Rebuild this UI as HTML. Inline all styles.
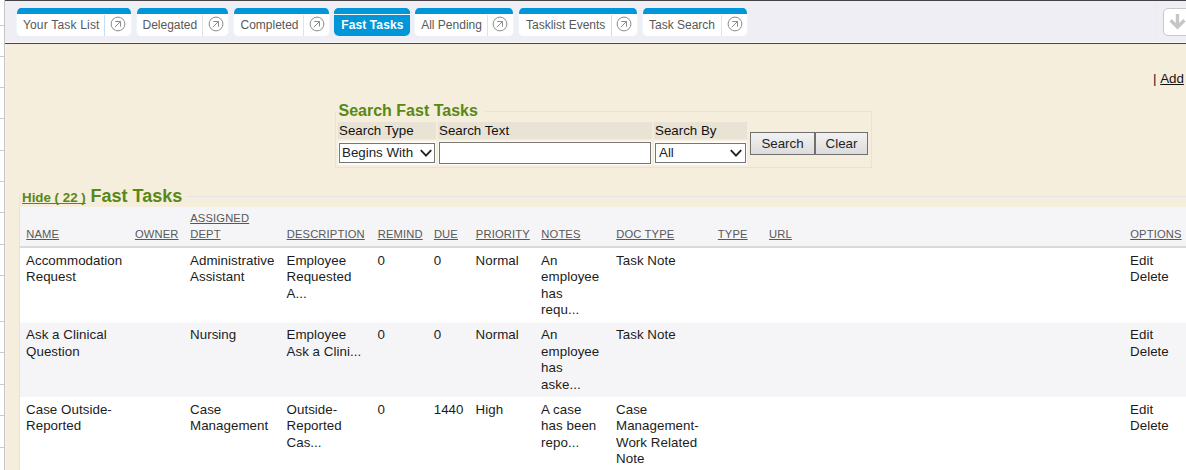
<!DOCTYPE html>
<html><head><meta charset="utf-8">
<style>
*{box-sizing:border-box;margin:0;padding:0;text-decoration-skip-ink:none}
html,body{width:1186px;height:470px;overflow:hidden;background:#fff;font-family:"Liberation Sans",sans-serif;position:relative}
.a{position:absolute}
#strip{left:4px;top:0;width:1px;height:470px;background:#c3c5cb}
.tick{position:absolute;left:0;width:4px;height:1px;background:#c8cace}
#bar{left:5px;top:0;width:1181px;height:44px;background:#efeef4;border-top:1px solid #444;border-bottom:1px solid #454545}
#barhl{left:5px;top:42px;width:1181px;height:1px;background:#fbfbfc}
#beige{left:5px;top:44px;width:1181px;height:426px;background:#f5eedd}
.tab{position:absolute;top:8px;height:28px;background:#fff;border-radius:5px;overflow:hidden;border-left:1px solid #edf6fc;border-right:1px solid #edf6fc}
.tab .top{position:absolute;left:-1px;right:-1px;top:0;height:6px;background:#0096d8}
.tab .t{position:absolute;top:10px;font-size:12px;color:#585858;white-space:nowrap;line-height:14px}
.tab .sep{position:absolute;top:7px;width:1px;height:21px;background:#e2e2e2}
.tab svg{position:absolute;top:8.3px}
.tab.act{background:#0096d8;border:none}
.tab.act .line{position:absolute;left:0;right:0;top:6px;height:1px;background:#f2f9fd}
.tab.act .t{color:#fff;font-weight:bold}
#dl{left:1163px;top:8px;width:40px;height:28px;background:#fff;border:1px solid #c8c8c8;border-radius:5px}
.c{position:absolute;font-size:13.33px;line-height:16.5px;color:#1c1c1c;white-space:nowrap;letter-spacing:0.05px}
.h{position:absolute;font-size:11.2px;line-height:16px;color:#585858;letter-spacing:0.15px;text-decoration:underline;white-space:nowrap}
.lbl{position:absolute;font-size:13.33px;line-height:16px;color:#111;white-space:nowrap}
.sel{position:absolute;height:20px;background:#fff;border:1px solid #767676;font-size:13.33px;color:#222;line-height:18px;padding-left:2px;white-space:nowrap}
.sel svg{position:absolute;top:4.5px}
.btn{position:absolute;top:132px;height:23px;border:1px solid #707070;background:linear-gradient(#f2f2f2,#dcdcdc);font-size:13.33px;color:#222;text-align:center;line-height:21.5px}
</style></head><body>
<div class="a" id="bar"></div>
<div class="a" id="barhl"></div>
<div class="a" id="beige"></div>
<div class="a" id="strip"></div>
<div class="a" style="left:5px;top:44px;width:1px;height:426px;background:#f9f4ea"></div>
<div class="tick" style="top:25px"></div><div class="tick" style="top:56px"></div><div class="tick" style="top:87px"></div><div class="tick" style="top:118px"></div><div class="tick" style="top:150px"></div><div class="tick" style="top:181px"></div><div class="tick" style="top:212px"></div><div class="tick" style="top:244px"></div><div class="tick" style="top:275px"></div><div class="tick" style="top:321px"></div><div class="tick" style="top:352px"></div><div class="tick" style="top:384px"></div><div class="tick" style="top:415px"></div><div class="tick" style="top:447px"></div>
<div class="tab" style="left:16px;width:116px"><div class="top"></div><span class="t" style="left:5.9px;letter-spacing:0.19px">Your Task List</span><div class="sep" style="left:87px;background:#bfe0f3"></div><svg style="left:93.3px" width="16" height="16" viewBox="0 0 16 16"><circle cx="8" cy="8" r="6.9" fill="none" stroke="#8c8c8c" stroke-width="1"/><path d="M4.8 11.2L10.5 5.5M5.3 5.5H10.5V10.6" fill="none" stroke="#8c8c8c" stroke-width="1"/></svg></div>
<div class="tab" style="left:136px;width:93px"><div class="top"></div><span class="t" style="left:5.5px;letter-spacing:0px">Delegated</span><div class="sep" style="left:65px;background:#e2e2e2"></div><svg style="left:70.6px" width="16" height="16" viewBox="0 0 16 16"><circle cx="8" cy="8" r="6.9" fill="none" stroke="#8c8c8c" stroke-width="1"/><path d="M4.8 11.2L10.5 5.5M5.3 5.5H10.5V10.6" fill="none" stroke="#8c8c8c" stroke-width="1"/></svg></div>
<div class="tab" style="left:233px;width:97px"><div class="top"></div><span class="t" style="left:6.5px;letter-spacing:0px">Completed</span><div class="sep" style="left:69px;background:#e2e2e2"></div><svg style="left:74.6px" width="16" height="16" viewBox="0 0 16 16"><circle cx="8" cy="8" r="6.9" fill="none" stroke="#8c8c8c" stroke-width="1"/><path d="M4.8 11.2L10.5 5.5M5.3 5.5H10.5V10.6" fill="none" stroke="#8c8c8c" stroke-width="1"/></svg></div>
<div class="tab act" style="left:334px;width:76px"><div class="top"></div><div class="line"></div><span class="t" style="left:7.2px;letter-spacing:0.12px">Fast Tasks</span></div>
<div class="tab" style="left:414px;width:100px"><div class="top"></div><span class="t" style="left:6.2px;letter-spacing:0px">All Pending</span><div class="sep" style="left:72px;background:#e2e2e2"></div><svg style="left:77.4px" width="16" height="16" viewBox="0 0 16 16"><circle cx="8" cy="8" r="6.9" fill="none" stroke="#8c8c8c" stroke-width="1"/><path d="M4.8 11.2L10.5 5.5M5.3 5.5H10.5V10.6" fill="none" stroke="#8c8c8c" stroke-width="1"/></svg></div>
<div class="tab" style="left:518px;width:120px"><div class="top"></div><span class="t" style="left:7.0px;letter-spacing:0px">Tasklist Events</span><div class="sep" style="left:92px;background:#bfe0f3"></div><svg style="left:97.3px" width="16" height="16" viewBox="0 0 16 16"><circle cx="8" cy="8" r="6.9" fill="none" stroke="#8c8c8c" stroke-width="1"/><path d="M4.8 11.2L10.5 5.5M5.3 5.5H10.5V10.6" fill="none" stroke="#8c8c8c" stroke-width="1"/></svg></div>
<div class="tab" style="left:642px;width:106px"><div class="top"></div><span class="t" style="left:6.0px;letter-spacing:0px">Task Search</span><div class="sep" style="left:78px;background:#e2e2e2"></div><svg style="left:83.5px" width="16" height="16" viewBox="0 0 16 16"><circle cx="8" cy="8" r="6.9" fill="none" stroke="#8c8c8c" stroke-width="1"/><path d="M4.8 11.2L10.5 5.5M5.3 5.5H10.5V10.6" fill="none" stroke="#8c8c8c" stroke-width="1"/></svg></div>
<div class="a" style="left:1156px;top:1px;width:1px;height:41px;background:#ecebf1"></div>
<div class="a" id="dl"><svg style="position:absolute;left:4.5px;top:3.5px" width="18" height="18" viewBox="0 0 18 18"><path d="M8.5 1V14M1.6 7.2L8.5 14.1L15.4 7.2" fill="none" stroke="#c6c6c6" stroke-width="3.4"/></svg></div>

<div class="lbl" style="left:1153px;top:71px;font-size:13.33px">|&nbsp;<span style="text-decoration:underline">Add</span></div>

<!-- search fieldset -->
<div class="a" style="left:335px;top:111px;width:537px;height:57px;border:1px solid #e3e3e7"></div>
<div class="a" style="left:337px;top:100px;width:148px;height:16px;background:#f5eedd"></div>
<div class="a" style="left:338.5px;top:100.5px;font-size:16px;font-weight:bold;color:#588816;line-height:19px;white-space:nowrap">Search Fast Tasks</div>
<div class="a" style="left:338px;top:122px;width:98px;height:17px;background:#e9e3d5"></div>
<div class="a" style="left:438px;top:122px;width:214px;height:17px;background:#e9e3d5"></div>
<div class="a" style="left:654px;top:122px;width:93px;height:17px;background:#e9e3d5"></div>
<div class="a" style="left:338px;top:141px;width:98px;height:24px;background:#fdfbf7"></div>
<div class="a" style="left:438px;top:141px;width:214px;height:24px;background:#fdfbf7"></div>
<div class="a" style="left:654px;top:141px;width:93px;height:24px;background:#fdfbf7"></div>
<div class="lbl" style="left:339px;top:123px">Search Type</div>
<div class="lbl" style="left:439px;top:123px">Search Text</div>
<div class="lbl" style="left:655px;top:123px">Search By</div>
<div class="sel" style="left:339px;top:143px;width:96px">Begins With<svg style="left:80px" width="12" height="8" viewBox="0 0 12 8"><path d="M0.8 1.2L6 6.6L11.2 1.2" fill="none" stroke="#222" stroke-width="1.9"/></svg></div>
<div class="a" style="left:439px;top:142px;width:212px;height:22px;background:#fff;border:1px solid #767676"></div>
<div class="sel" style="left:655px;top:143px;width:91px;padding-left:3px">All<svg style="left:74px" width="12" height="8" viewBox="0 0 12 8"><path d="M0.8 1.2L6 6.6L11.2 1.2" fill="none" stroke="#222" stroke-width="1.9"/></svg></div>
<div class="btn" style="left:750px;width:65px">Search</div>
<div class="btn" style="left:815px;width:53px">Clear</div>

<!-- section -->
<div class="a" style="left:19px;top:196px;width:1px;height:274px;background:#e3e3e7"></div>
<div class="a" style="left:188px;top:196px;width:998px;height:1px;background:#e3e3e7"></div>
<div class="a" style="left:22px;top:188.5px;font-size:13.33px;font-weight:bold;color:#588816;text-decoration:underline;line-height:17px;white-space:nowrap">Hide ( 22 )</div>
<div class="a" style="left:90.5px;top:185.5px;font-size:18px;font-weight:bold;color:#588816;line-height:21px;white-space:nowrap">Fast Tasks</div>

<div class="a" style="left:20px;top:207px;width:1166px;height:39px;background:#f5f5f8"></div>
<div class="a" style="left:20px;top:246px;width:1166px;height:2px;background:#d9d9d9"></div>
<div class="h" style="left:26.2px;top:226px">NAME</div>
<div class="h" style="left:134.9px;top:226px">OWNER</div>
<div class="h" style="left:286.7px;top:226px">DESCRIPTION</div>
<div class="h" style="left:377.7px;top:226px">REMIND</div>
<div class="h" style="left:433.9px;top:226px">DUE</div>
<div class="h" style="left:475.8px;top:226px">PRIORITY</div>
<div class="h" style="left:541.3px;top:226px">NOTES</div>
<div class="h" style="left:616.2px;top:226px">DOC TYPE</div>
<div class="h" style="left:717.8px;top:226px">TYPE</div>
<div class="h" style="left:769.0px;top:226px">URL</div>
<div class="h" style="left:1130.2px;top:226px">OPTIONS</div>
<div class="h" style="left:190.2px;top:210px">ASSIGNED</div>
<div class="h" style="left:190.2px;top:226px">DEPT</div>
<div class="a" style="left:20px;top:248px;width:1166px;height:74px;background:#fff"></div>
<div class="c" style="left:26.0px;top:252.6px">Accommodation<br>Request</div>
<div class="c" style="left:190.0px;top:252.6px">Administrative<br>Assistant</div>
<div class="c" style="left:286.5px;top:252.6px">Employee<br>Requested<br>A...</div>
<div class="c" style="left:377.5px;top:252.6px">0</div>
<div class="c" style="left:433.7px;top:252.6px">0</div>
<div class="c" style="left:475.6px;top:252.6px">Normal</div>
<div class="c" style="left:541.1px;top:252.6px">An<br>employee<br>has<br>requ...</div>
<div class="c" style="left:616.0px;top:252.6px">Task Note</div>
<div class="c" style="left:1130.0px;top:252.6px">Edit<br>Delete</div>
<div class="a" style="left:20px;top:323px;width:1166px;height:74px;background:#f5f5f8"></div>
<div class="a" style="left:20px;top:322px;width:1166px;height:1px;background:#fafafc"></div>
<div class="c" style="left:26.0px;top:327.1px">Ask a Clinical<br>Question</div>
<div class="c" style="left:190.0px;top:327.1px">Nursing</div>
<div class="c" style="left:286.5px;top:327.1px">Employee<br>Ask a Clini...</div>
<div class="c" style="left:377.5px;top:327.1px">0</div>
<div class="c" style="left:433.7px;top:327.1px">0</div>
<div class="c" style="left:475.6px;top:327.1px">Normal</div>
<div class="c" style="left:541.1px;top:327.1px">An<br>employee<br>has<br>aske...</div>
<div class="c" style="left:616.0px;top:327.1px">Task Note</div>
<div class="c" style="left:1130.0px;top:327.1px">Edit<br>Delete</div>
<div class="a" style="left:20px;top:397px;width:1166px;height:80px;background:#fff"></div>
<div class="c" style="left:26.0px;top:401.6px">Case Outside-<br>Reported</div>
<div class="c" style="left:190.0px;top:401.6px">Case<br>Management</div>
<div class="c" style="left:286.5px;top:401.6px">Outside-<br>Reported<br>Cas...</div>
<div class="c" style="left:377.5px;top:401.6px">0</div>
<div class="c" style="left:433.7px;top:401.6px">1440</div>
<div class="c" style="left:475.6px;top:401.6px">High</div>
<div class="c" style="left:541.1px;top:401.6px">A case<br>has been<br>repo...</div>
<div class="c" style="left:616.0px;top:401.6px">Case<br>Management-<br>Work Related<br>Note</div>
<div class="c" style="left:1130.0px;top:401.6px">Edit<br>Delete</div>
</body></html>
